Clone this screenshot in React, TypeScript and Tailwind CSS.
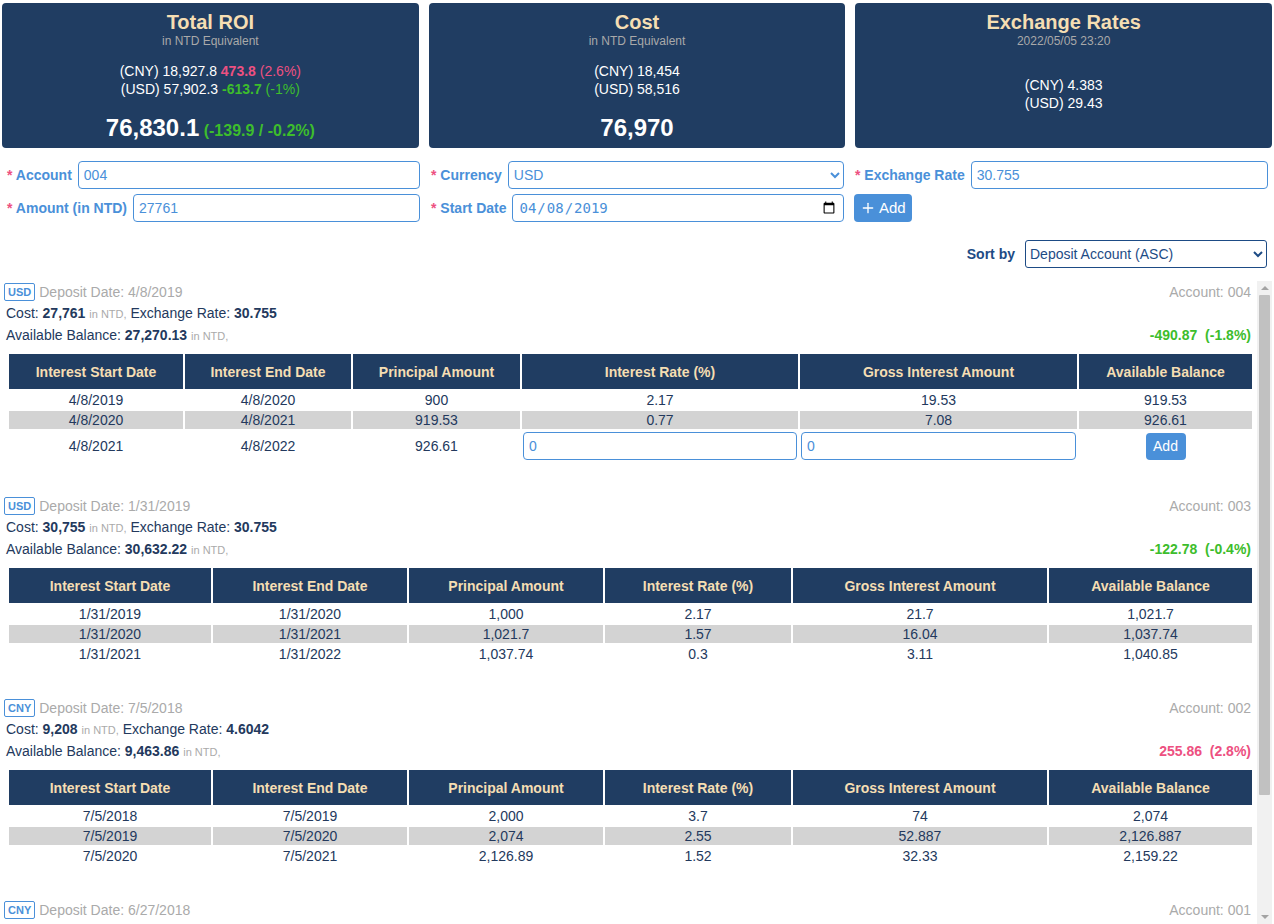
import { Plus } from "lucide-react";

type Deposit = {
  currency: string;
  date: string;
  account: string;
  cost: string;
  rate: string;
  balance: string;
  diff: string;
  pct: string;
  up: boolean;
  cols: string[];
  rows: string[][];
  pending?: string[];
};

const headers = [
  "Interest Start Date",
  "Interest End Date",
  "Principal Amount",
  "Interest Rate (%)",
  "Gross Interest Amount",
  "Available Balance",
];

const editCols = ["w-[174px]", "w-[166px]", "w-[167px]", "w-[276px]", "w-[277px]", "w-[173px]"];
const plainCols = ["w-[202px]", "w-[194px]", "w-[194px]", "w-[186px]", "w-[254px]", "w-[203px]"];

const deposits: Deposit[] = [
  {
    currency: "USD",
    date: "4/8/2019",
    account: "004",
    cost: "27,761",
    rate: "30.755",
    balance: "27,270.13",
    diff: "-490.87",
    pct: "(-1.8%)",
    up: false,
    cols: editCols,
    rows: [
      ["4/8/2019", "4/8/2020", "900", "2.17", "19.53", "919.53"],
      ["4/8/2020", "4/8/2021", "919.53", "0.77", "7.08", "926.61"],
    ],
    pending: ["4/8/2021", "4/8/2022", "926.61"],
  },
  {
    currency: "USD",
    date: "1/31/2019",
    account: "003",
    cost: "30,755",
    rate: "30.755",
    balance: "30,632.22",
    diff: "-122.78",
    pct: "(-0.4%)",
    up: false,
    cols: plainCols,
    rows: [
      ["1/31/2019", "1/31/2020", "1,000", "2.17", "21.7", "1,021.7"],
      ["1/31/2020", "1/31/2021", "1,021.7", "1.57", "16.04", "1,037.74"],
      ["1/31/2021", "1/31/2022", "1,037.74", "0.3", "3.11", "1,040.85"],
    ],
  },
  {
    currency: "CNY",
    date: "7/5/2018",
    account: "002",
    cost: "9,208",
    rate: "4.6042",
    balance: "9,463.86",
    diff: "255.86",
    pct: "(2.8%)",
    up: true,
    cols: plainCols,
    rows: [
      ["7/5/2018", "7/5/2019", "2,000", "3.7", "74", "2,074"],
      ["7/5/2019", "7/5/2020", "2,074", "2.55", "52.887", "2,126.887"],
      ["7/5/2020", "7/5/2021", "2,126.89", "1.52", "32.33", "2,159.22"],
    ],
  },
  {
    currency: "CNY",
    date: "6/27/2018",
    account: "001",
    cost: "9,246",
    rate: "4.6230",
    balance: "9,497.39",
    diff: "251.39",
    pct: "(2.7%)",
    up: true,
    cols: plainCols,
    rows: [
      ["6/27/2018", "6/27/2019", "2,000", "3.7", "74", "2,074"],
      ["6/27/2019", "6/27/2020", "2,074", "2.55", "52.89", "2,126.89"],
      ["6/27/2020", "6/27/2021", "2,126.89", "1.52", "32.33", "2,159.22"],
    ],
  },
];

function Field({ label, children }: { label: string; children: React.ReactNode }) {
  return (
    <div className="flex items-center gap-[6px]">
      <label className="whitespace-nowrap pl-px text-[14px] font-bold text-[#4a90d9]">
        <span className="text-[#ed5081]">*</span> {label}
      </label>
      {children}
    </div>
  );
}

const inputCls =
  "h-[28px] min-w-0 flex-1 rounded-[4px] border border-[#4a90d9] bg-white px-[5px] text-[14px] text-[#4a90d9] outline-none";
const selectCls =
  "h-[28px] min-w-0 flex-1 rounded-[4px] border border-[#4a90d9] bg-white px-px text-[14px] text-[#4a90d9] outline-none";

function InterestTable({ d }: { d: Deposit }) {
  return (
    <table className="ml-[5px] mt-[5px] w-[1247px] table-fixed border-separate border-spacing-[2px] text-center text-[14px] leading-[18px]">
      <colgroup>
        {d.cols.map((c, i) => (
          <col key={i} className={c} />
        ))}
      </colgroup>
      <thead>
        <tr>
          {headers.map((h) => (
            <th key={h} className="h-[35px] bg-[#203d62] font-bold text-[#f5deb3]">
              {h}
            </th>
          ))}
        </tr>
      </thead>
      <tbody>
        {d.rows.map((r, i) => (
          <tr key={i} className={i % 2 === 1 ? "bg-[#d3d3d3]" : ""}>
            {r.map((c, j) => (
              <td key={j} className="h-[18px] p-0">
                {c}
              </td>
            ))}
          </tr>
        ))}
        {d.pending && (
          <tr>
            {d.pending.map((c, j) => (
              <td key={j} className="p-0">
                {c}
              </td>
            ))}
            <td className="p-px">
              <input defaultValue="0" className="h-[28px] w-full rounded-[4px] border border-[#4a90d9] px-[5px] text-[14px] text-[#4a90d9] outline-none" />
            </td>
            <td className="p-px">
              <input defaultValue="0" className="h-[28px] w-full rounded-[4px] border border-[#4a90d9] px-[5px] text-[14px] text-[#4a90d9] outline-none" />
            </td>
            <td className="p-px">
              <button className="h-[27px] w-[40px] rounded-[4px] bg-[#4a90d9] text-[14px] text-white">Add</button>
            </td>
          </tr>
        )}
      </tbody>
    </table>
  );
}

function DepositCard({ d }: { d: Deposit }) {
  const color = d.up ? "text-[#ed5081]" : "text-[#3dbd2c]";
  return (
    <div className="mb-[32px] pr-[6px] text-[14px] text-[#23395d]">
      <div className="flex h-[22px] items-center justify-between pl-[2px]">
        <div className="flex items-center gap-[4px]">
          <span className="h-[18px] rounded-[2px] border border-[#4a90d9] px-[3px] text-[11px] font-bold leading-[16px] text-[#4a90d9]">
            {d.currency}
          </span>
          <span className="text-[#aaaaaa]">Deposit Date: {d.date}</span>
        </div>
        <span className="text-[#aaaaaa]">Account: {d.account}</span>
      </div>
      <div className="pl-[4px] leading-[21px]">
        Cost: <b>{d.cost}</b> <span className="text-[11px] text-[#aaaaaa]">in NTD,</span> Exchange Rate:{" "}
        <b>{d.rate}</b>
      </div>
      <div className="flex justify-between pl-[4px] leading-[21px]">
        <div>
          Available Balance: <b>{d.balance}</b> <span className="text-[11px] text-[#aaaaaa]">in NTD,</span>
        </div>
        <b className={`whitespace-pre ${color}`}>
          {d.diff}  {d.pct}
        </b>
      </div>
      <InterestTable d={d} />
    </div>
  );
}

function ScrollTrack() {
  return (
    <div className="flex w-[15px] shrink-0 flex-col bg-[#f1f1f1]">
      <div className="flex h-[14px] items-center justify-center">
        <div className="h-0 w-0 border-x-[4px] border-b-[4px] border-x-transparent border-b-[#a3a3a3]" />
      </div>
      <div className="mx-[2px] h-[500px] rounded-[1px] bg-[#c1c1c1]" />
      <div className="flex-1" />
      <div className="flex h-[14px] items-center justify-center">
        <div className="h-0 w-0 border-x-[4px] border-t-[4px] border-x-transparent border-t-[#a3a3a3]" />
      </div>
    </div>
  );
}

export default function App() {
  return (
    <div className="flex h-screen flex-col overflow-hidden bg-white px-[2px] font-['Liberation_Sans',Arial,sans-serif] text-[#23395d]">
      {/* Summary */}
      <div className="mt-[3px] grid h-[145px] grid-cols-3 gap-[10px]">
        <div className="flex flex-col items-center rounded-[4px] bg-[#203d62] pt-[7px] text-white">
          <div className="text-[20px] font-bold leading-[24px] text-[#f5deb3]">Total ROI</div>
          <div className="text-[12px] leading-[14px] text-[#a9a9a9]">in NTD Equivalent</div>
          <div className="mt-[14px] text-center text-[14px] leading-[18px]">
            <div>
              (CNY) 18,927.8 <b className="text-[#ed5081]">473.8</b> <span className="text-[#ed5081]">(2.6%)</span>
            </div>
            <div>
              (USD) 57,902.3 <b className="text-[#3dbd2c]">-613.7</b> <span className="text-[#3dbd2c]">(-1%)</span>
            </div>
          </div>
          <div className="mt-[15px] leading-[30px]">
            <span className="text-[24px] font-bold">76,830.1</span>{" "}
            <span className="text-[16px] font-bold text-[#3dbd2c]">(-139.9 / -0.2%)</span>
          </div>
        </div>
        <div className="flex flex-col items-center rounded-[4px] bg-[#203d62] pt-[7px] text-white">
          <div className="text-[20px] font-bold leading-[24px] text-[#f5deb3]">Cost</div>
          <div className="text-[12px] leading-[14px] text-[#a9a9a9]">in NTD Equivalent</div>
          <div className="mt-[14px] text-center text-[14px] leading-[18px]">
            <div>(CNY) 18,454</div>
            <div>(USD) 58,516</div>
          </div>
          <div className="mt-[15px] text-[24px] font-bold leading-[30px]">76,970</div>
        </div>
        <div className="flex flex-col items-center rounded-[4px] bg-[#203d62] pb-[8px] pt-[7px] text-white">
          <div className="text-[20px] font-bold leading-[24px] text-[#f5deb3]">Exchange Rates</div>
          <div className="text-[12px] leading-[14px] text-[#a9a9a9]">2022/05/05 23:20</div>
          <div className="flex flex-1 flex-col justify-center text-center text-[14px] leading-[18px]">
            <div>(CNY) 4.383</div>
            <div>(USD) 29.43</div>
          </div>
        </div>
      </div>

      {/* New deposit form */}
      <div className="mt-[13px] grid grid-cols-3 gap-x-[10px] gap-y-[5px] px-[4px]">
        <Field label="Account">
          <input defaultValue="004" className={inputCls} />
        </Field>
        <Field label="Currency">
          <select defaultValue="USD" className={selectCls}>
            <option>USD</option>
            <option>CNY</option>
          </select>
        </Field>
        <Field label="Exchange Rate">
          <input defaultValue="30.755" className={inputCls} />
        </Field>
        <Field label="Amount (in NTD)">
          <input defaultValue="27761" className={inputCls} />
        </Field>
        <Field label="Start Date">
          <input type="date" defaultValue="2019-04-08" className={`${inputCls} font-['DejaVu_Sans_Mono',monospace]`} />
        </Field>
        <div>
          <button className="flex h-[28px] items-center gap-[3px] rounded-[4px] bg-[#4a90d9] px-[6px] text-[15px] text-white">
            <Plus className="h-[16px] w-[16px]" strokeWidth={2} />
            Add
          </button>
        </div>
      </div>

      {/* Sort */}
      <div className="mt-[18px] flex items-center justify-end gap-[10px] pr-[5px]">
        <span className="text-[14px] font-bold text-[#1d4b85]">Sort by</span>
        <select
          defaultValue="account-asc"
          className="h-[28px] w-[242px] rounded-[3px] border border-[#1d4b85] bg-white px-0 text-[14px] text-[#1d4b85] outline-none"
        >
          <option value="account-asc">Deposit Account (ASC)</option>
          <option value="account-desc">Deposit Account (DESC)</option>
          <option value="date-asc">Deposit Date (ASC)</option>
          <option value="date-desc">Deposit Date (DESC)</option>
        </select>
      </div>

      {/* Deposits */}
      <div className="mt-[13px] flex min-h-0 flex-1">
        <div className="min-w-0 flex-1 overflow-y-scroll [scrollbar-width:none]">
          {deposits.map((d) => (
            <DepositCard key={d.account} d={d} />
          ))}
        </div>
        <ScrollTrack />
      </div>
    </div>
  );
}
